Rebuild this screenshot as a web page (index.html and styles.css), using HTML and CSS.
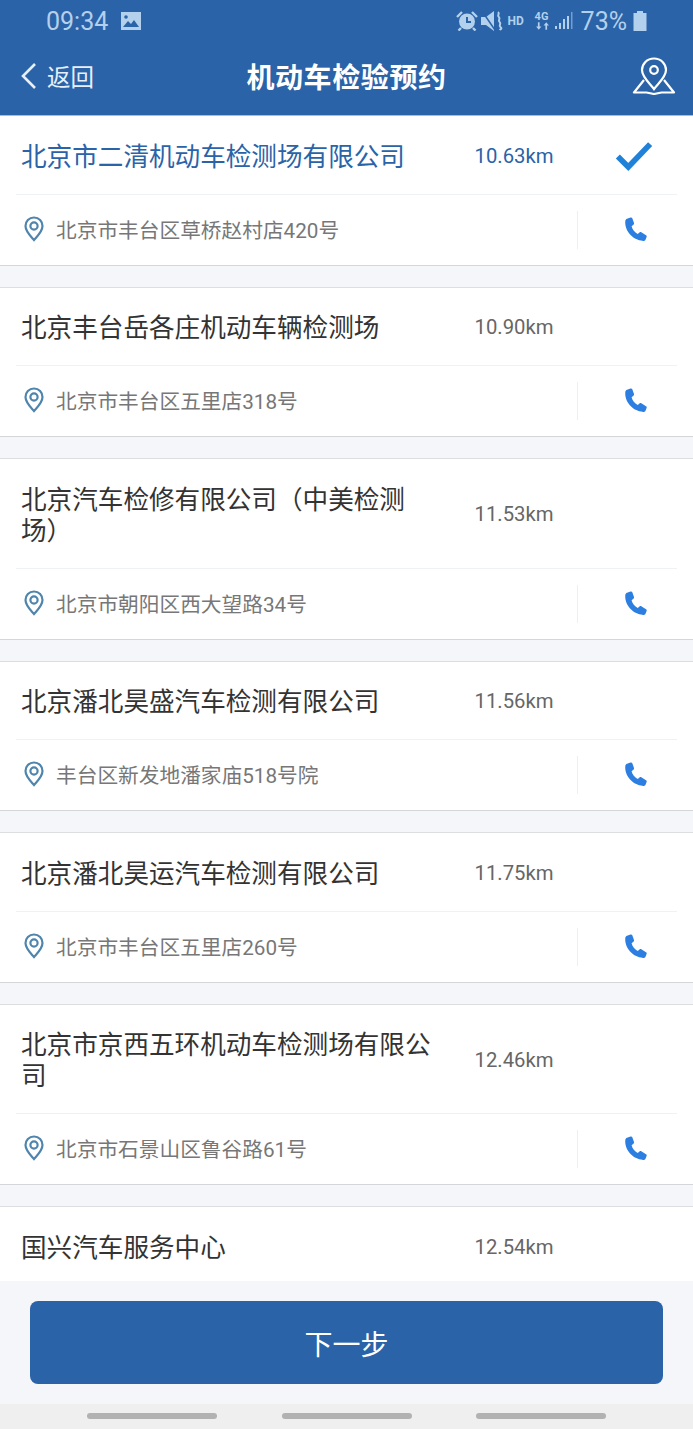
FILE: index.html
```html
<!DOCTYPE html>
<html lang="zh-CN">
<head>
  <meta charset="UTF-8" />
  <meta name="viewport" content="width=device-width, initial-scale=1.0"/>
  <title>机动车检验预约</title>
  <link rel="stylesheet" href="styles.css">
</head>
<body>
  <svg class="defs">
    <symbol id="pin" viewBox="0 0 20 26">
      <path d="M10 1.500C5 1.500 1.500 5.400 1.500 10c0 5.600 5.600 10.600 8.500 14 2.900-3.400 8.500-8.400 8.500-14 0-4.600-3.500-8.500-8.500-8.500z" fill="none" stroke="currentColor" stroke-width="2.200"/>
      <circle cx="10" cy="10" r="3.600" fill="none" stroke="currentColor" stroke-width="2.200"/>
    </symbol>
    <symbol id="phone" viewBox="0 0 24 26">
      <path d="M3 1.800 6.500.5c.8-.3 1.500 0 1.800.8l1.700 4.800c.2.700 0 1.300-.6 1.700L7.600 9.200c.9 3.400 3 6 6.100 7.800l1.800-1.500c.5-.5 1.200-.6 1.800-.2l4.700 2.900c.7.400.9 1.100.6 1.800l-1 2.400c-.4 1-1.300 1.600-2.400 1.500C8.500 23.400.4 13.500 1.300 4.100c.1-1.100.7-1.900 1.700-2.300z" fill="currentColor"/>
    </symbol>
  </svg>

  <header class="top">
    <div class="statusbar">
      <div class="status-left">
        <span class="clock">09:34</span>
        <svg class="st-img" viewBox="0 0 20 18"><path d="M0 0h20v18H0z" fill="currentColor"/><path d="M2 15l5-6 3 3 3-4 5 7z" fill="#2a63a8"/><circle cx="5" cy="5" r="1.800" fill="#2a63a8"/></svg>
      </div>
      <div class="status-right">
        <svg class="st-alarm" viewBox="0 0 22 20">
          <circle cx="11" cy="10.500" r="8" fill="currentColor"/>
          <path d="M11 6v5h4" fill="none" stroke="#2a63a8" stroke-width="2"/>
          <path d="M1 6l5-5M21 6l-5-5M5 17l-2.500 2.500M17 17l2.500 2.500" stroke="currentColor" stroke-width="2.400" fill="none"/>
        </svg>
        <svg class="st-mute" viewBox="0 0 22 20">
          <path d="M0 6h5l8-6v20l-8-6H0z" fill="currentColor"/>
          <path d="M1 0l13 19" stroke="#2a63a8" stroke-width="1.500"/>
          <path d="M17 1c2.500 2-1.500 3 .8 5s-1.500 3 .8 5-1.500 3 .8 5 0 2-.8 3" fill="none" stroke="currentColor" stroke-width="2"/>
        </svg>
        <span class="st-hd">HD</span>
        <span class="st-net">4G<svg viewBox="0 0 14 7"><path d="M3.500 7 1 4h1.700V0h1.600v4H6zM10.500 0 13 3h-1.700v4H9.700V3H8z" fill="currentColor"/></svg></span>
        <svg class="st-signal" viewBox="0 0 18 18">
          <path d="M0 14h2v3H0zM4 11h2v6H4zM8 7h2v10H8zM12 4h2v13h-2z" fill="currentColor"/>
          <path d="M16 0h1.500v17H16z" fill="currentColor" opacity=".55"/>
        </svg>
        <span class="st-pct">73%</span>
        <svg class="st-batt" viewBox="0 0 14 20"><path d="M4 0h6v2h3.500v18H.5V2H4z" fill="currentColor"/></svg>
      </div>
    </div>
    <div class="navbar">
      <a class="back">
        <svg viewBox="0 0 18 28"><path d="M15 2 3 14l12 12" fill="none" stroke="currentColor" stroke-width="2.600"/></svg>
        <span>返回</span>
      </a>
      <h1>机动车检验预约</h1>
      <svg class="map-btn" viewBox="0 0 44 38">
        <path d="M22 1.500c-7 0-12 5.300-12 11.600C10 20.500 18.500 27 22 32c3.500-5 12-11.500 12-18.900C34 6.800 29 1.500 22 1.500z" fill="none" stroke="currentColor" stroke-width="2.200"/>
        <circle cx="22" cy="13" r="3.800" fill="none" stroke="currentColor" stroke-width="2.200"/>
        <path d="M12 23 2 35.500h12.500L22 37l7.500-1.500H42L32 23" fill="none" stroke="currentColor" stroke-width="2.200" stroke-linejoin="round"/>
      </svg>
    </div>
  </header>

  <main class="list">
    <section class="station selected">
      <div class="station-main">
        <div class="name">北京市二清机动车检测场有限公司</div>
        <div class="dist">10.63km</div>
        <div class="mark"><svg viewBox="0 0 40 32"><path d="M3 17l11 11L37 4" fill="none" stroke="currentColor" stroke-width="6"/></svg></div>
      </div>
      <div class="station-addr">
        <svg class="pin"><use href="#pin"/></svg>
        <span class="addr">北京市丰台区草桥赵村店420号</span>
        <span class="call"><svg><use href="#phone"/></svg></span>
      </div>
    </section>

    <section class="station">
      <div class="station-main">
        <div class="name">北京丰台岳各庄机动车辆检测场</div>
        <div class="dist">10.90km</div>
        <div class="mark"></div>
      </div>
      <div class="station-addr">
        <svg class="pin"><use href="#pin"/></svg>
        <span class="addr">北京市丰台区五里店318号</span>
        <span class="call"><svg><use href="#phone"/></svg></span>
      </div>
    </section>

    <section class="station">
      <div class="station-main">
        <div class="name">北京汽车检修有限公司（中美检测场）</div>
        <div class="dist">11.53km</div>
        <div class="mark"></div>
      </div>
      <div class="station-addr">
        <svg class="pin"><use href="#pin"/></svg>
        <span class="addr">北京市朝阳区西大望路34号</span>
        <span class="call"><svg><use href="#phone"/></svg></span>
      </div>
    </section>

    <section class="station">
      <div class="station-main">
        <div class="name">北京潘北昊盛汽车检测有限公司</div>
        <div class="dist">11.56km</div>
        <div class="mark"></div>
      </div>
      <div class="station-addr">
        <svg class="pin"><use href="#pin"/></svg>
        <span class="addr">丰台区新发地潘家庙518号院</span>
        <span class="call"><svg><use href="#phone"/></svg></span>
      </div>
    </section>

    <section class="station">
      <div class="station-main">
        <div class="name">北京潘北昊运汽车检测有限公司</div>
        <div class="dist">11.75km</div>
        <div class="mark"></div>
      </div>
      <div class="station-addr">
        <svg class="pin"><use href="#pin"/></svg>
        <span class="addr">北京市丰台区五里店260号</span>
        <span class="call"><svg><use href="#phone"/></svg></span>
      </div>
    </section>

    <section class="station">
      <div class="station-main">
        <div class="name">北京市京西五环机动车检测场有限公司</div>
        <div class="dist">12.46km</div>
        <div class="mark"></div>
      </div>
      <div class="station-addr">
        <svg class="pin"><use href="#pin"/></svg>
        <span class="addr">北京市石景山区鲁谷路61号</span>
        <span class="call"><svg><use href="#phone"/></svg></span>
      </div>
    </section>

    <section class="station">
      <div class="station-main">
        <div class="name">国兴汽车服务中心</div>
        <div class="dist">12.54km</div>
        <div class="mark"></div>
      </div>
    </section>
  </main>

  <footer class="actions">
    <button class="next">下一步</button>
  </footer>

  <div class="softkeys"><i></i><i></i><i></i></div>
</body>
</html>
```

FILE: styles.css
```css
* { box-sizing: border-box; }
html, body { height: 100%; }
body { margin: 0; height: 1429px; overflow: hidden; display: flex; flex-direction: column; background: #f5f6f9; font-family: Roboto, "Noto Sans CJK SC", sans-serif; }
.defs { display: none; }

.top { height: 116px; flex: none; background: #2a63a8; color: #fff; border-bottom: 1px solid #9cc0e0; }
.statusbar { height: 42px; display: flex; justify-content: space-between; align-items: center; padding: 0 46px; color: #b3d0ec; }
.status-left, .status-right { display: flex; align-items: center; }
.clock { font-size: 25px; width: 75px; }
.st-img { width: 20px; height: 18px; }
.st-alarm { width: 22px; height: 20px; margin-right: 3px; }
.st-mute { width: 22px; height: 20px; margin-right: 5px; }
.st-hd { font-size: 12px; font-weight: 700; width: 27px; }
.st-net { font-size: 11px; font-weight: 700; width: 18px; line-height: 10px; display: flex; flex-direction: column; margin-right: 2px; }
.st-net svg { width: 15px; height: 8px; }
.st-signal { width: 18px; height: 18px; margin-right: 8px; }
.st-pct { font-size: 25px; margin-right: 6px; }
.st-batt { width: 14px; height: 20px; }

.navbar { height: 72px; margin-top: -2px; display: grid; grid-template-columns: 1fr auto 1fr; align-items: center; padding: 0 17px; }
.back { display: flex; align-items: center; font-size: 23.500px; gap: 9px; margin-left: 3px; color: #e6f0fa; }
.back svg { width: 18px; height: 28px; }
.navbar h1 { margin: 0; font-size: 28px; font-weight: 700; letter-spacing: .6px; }
.map-btn { width: 44px; height: 38px; justify-self: end; }

.list { flex: 1; min-height: 0; overflow: hidden; display: flex; flex-direction: column; gap: 21px; }
.station { flex: none; background: #fff; border-bottom: 1px solid #d4d6d9; border-top: 1px solid #dcdee1; padding: 0 16px; }
.station:first-child { border-top: 0; }
.station:last-child { flex: 1; border-bottom: 0; }

.station-main { display: flex; align-items: center; padding: 22.500px 0 21px 5px; }
.station-addr { display: flex; align-items: center; height: 71px; border-top: 1px solid #f0f1f2; padding-left: 8px; }
.name { width: 453.500px; padding: 3px 40px 0 0; font-size: 25.600px; line-height: 31px; color: #333; }
.dist { width: 140.500px; font-size: 20.300px; color: #666; }
.mark { width: 48px; height: 31px; }
.mark svg { display: block; width: 38px; height: 31px; color: #2081d8; }
.selected .name, .selected .dist { color: #2a63a8; }

.pin { width: 20px; height: 26px; color: #4f85ac; flex: none; margin-bottom: 2px; }
.addr { flex: 1; margin-left: 12px; font-size: 20.700px; color: #777; margin-bottom: 2px; }
.call { width: 100px; height: 38px; padding-left: 16px; border-left: 1px solid #eeeff0; display: flex; align-items: center; justify-content: center; }
.call svg { width: 24px; height: 26px; color: #2c7fe0; }

.actions { flex: none; height: 123px; padding: 20px 30px 0; background: #f5f6f9; }
.next { display: block; width: 100%; height: 83px; border: 0; border-radius: 8px; background: #2a63a8; color: #fff; font: 28px Roboto, "Noto Sans CJK SC", sans-serif; }

.softkeys { flex: none; height: 25px; background: #efefef; display: flex; justify-content: space-between; padding: 9px 87px 0; }
.softkeys i { display: block; width: 130px; height: 6px; border-radius: 3px; background: #b2b2b2; }
```
